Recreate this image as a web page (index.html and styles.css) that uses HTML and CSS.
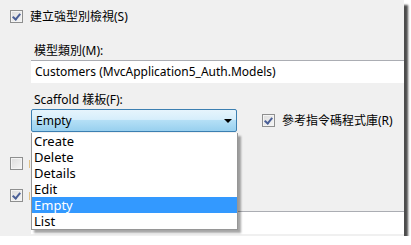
FILE: index.html
```html
<!DOCTYPE html>
<html lang="zh-Hant">
  <head>
    <meta charset="UTF-8" />
    <title>Add View</title>
    <link rel="stylesheet" href="styles.css">
  </head>
  <body>
    <div class="panel">
      <div class="check-row first">
        <span class="box checked"></span>
        <span class="check-text">建立強型別檢視(S)</span>
      </div>

      <div class="field">
        <div class="label">模型類別(M):</div>
        <div class="textbox">Customers (MvcApplication5_Auth.Models)</div>
      </div>

      <div class="field">
        <div class="label">Scaffold 樣板(F):</div>
        <div class="combo-row">
          <div class="combo">
            <span>Empty</span>
            <span class="arrow"></span>
          </div>
          <div class="check-row inline">
            <span class="box checked"></span>
            <span class="check-text">參考指令碼程式庫(R)</span>
          </div>
        </div>
      </div>

      <!-- these labels are hidden behind the open list -->
      <div class="check-row partial">
        <span class="box"></span>
        <span class="sliver"></span>
      </div>
      <div class="check-row layout">
        <span class="box checked"></span>
        <span class="sliver"></span>
      </div>
      <div class="textbox bottom"></div>

      <ul class="dropdown">
        <li>Create</li>
        <li>Delete</li>
        <li>Details</li>
        <li>Edit</li>
        <li class="selected">Empty</li>
        <li>List</li>
      </ul>
    </div>
  </body>
</html>
```

FILE: styles.css
```css
/* Base */
body {
  margin: 0;
  background-color: #fff;
  font-family: "Noto Sans", "Noto Sans CJK TC", sans-serif;
  font-size: 12px;
  color: #000;
}

.panel {
  position: relative;
  width: 404px;
  height: 236px;
  background-color: #f0f0f0;
  box-shadow: 4px 5px 2px rgba(0, 0, 0, 0.7);
}

/* Checkboxes */
.check-row {
  display: flex;
  align-items: center;
  gap: 7px;
  height: 13px;
  line-height: 13px;
  white-space: nowrap;
}

.check-row.first {
  padding: 10px 0 0 10px;
}

.check-row.partial {
  padding: 25px 0 0 10px;
}

.check-row.layout {
  padding: 19px 0 0 10px;
}

.check-row.inline {
  margin-left: 25px;
}

.box {
  width: 11px;
  height: 11px;
  border: 1px solid #8e8f8f;
  background: linear-gradient(135deg, #dcdcdc, #f6f6f6);
  box-shadow: inset 0 0 0 1px #f4f4f4;
  position: relative;
  flex: none;
}

.box.checked::after {
  content: "";
  position: absolute;
  left: 3px;
  top: 1px;
  width: 3px;
  height: 6px;
  border-right: 2px solid #4a5f97;
  border-bottom: 2px solid #4a5f97;
  transform: rotate(40deg);
}

.check-text {
  font-size: 12px;
}

/* edge of a label that pokes out from under the list */
.sliver {
  width: 1px;
  height: 8px;
  margin-left: -1px;
  background-color: #d9a441;
  opacity: 0.6;
}

/* Fields */
.field {
  padding-left: 31px;
}

.label {
  padding: 0 0 0 3px;
  height: 18px;
  line-height: 18px;
  margin-top: 19px;
}

.field + .field .label {
  margin-top: 8px;
}

.textbox {
  height: 22px;
  line-height: 22px;
  border-top: 1px solid #abadb3;
  background-color: #fff;
  padding-left: 4px;
  white-space: nowrap;
}

.textbox.bottom {
  margin: 9px 0 0 31px;
}

.combo-row {
  display: flex;
  align-items: center;
}

.combo {
  width: 200px;
  height: 21px;
  border: 1px solid #3c7fb1;
  border-radius: 2px;
  background: linear-gradient(#e6f4fc 0%, #d6eefb 45%, #b4dff6 50%, #98d0ef 100%);
  display: flex;
  align-items: center;
  justify-content: space-between;
  padding-left: 4px;
}

.arrow {
  width: 0;
  height: 0;
  border-left: 4px solid transparent;
  border-right: 4px solid transparent;
  border-top: 4px solid #000;
  margin-right: 4px;
}

/* Dropdown list */
.dropdown {
  position: absolute;
  left: 31px;
  top: 133px;
  width: 205px;
  margin: 0;
  padding: 0;
  list-style: none;
  background-color: #fff;
  border: 1px solid #969696;
  border-top: none;
  box-shadow: 3px 3px 2px rgba(0, 0, 0, 0.35);
  font-size: 13px;
}

.dropdown li {
  height: 16px;
  line-height: 16px;
  padding-left: 2px;
}

.dropdown li.selected {
  background-color: #3399ff;
  color: #fff;
}
```
